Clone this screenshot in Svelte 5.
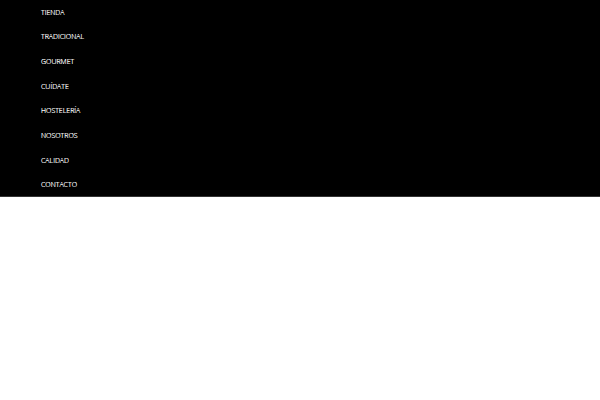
<script>
  const items = [
    'TIENDA',
    'TRADICIONAL',
    'GOURMET',
    'CUÍDATE',
    'HOSTELERÍA',
    'NOSOTROS',
    'CALIDAD',
    'CONTACTO'
  ];
</script>

<nav>
  <ul>
    {#each items as item}
      <li><a href="#{item.toLowerCase()}">{item}</a></li>
    {/each}
  </ul>
</nav>

<style>
  :global(body) {
    background: #fff;
  }

  nav {
    background: #000;
    box-shadow: inset 0 -1px #333, 0 1px 8px rgba(0, 0, 0, 0.03);
  }

  ul {
    display: grid;
    grid-auto-rows: 1fr;
    min-height: 197px;
    margin: 0;
    padding: 0 0 0 41px;
    list-style: none;
  }

  li {
    display: flex;
    align-items: center;
  }

  a {
    color: #fff;
    font: 300 7px/17px "Open Sans", sans-serif;
    text-decoration: none;
    text-shadow: 0 0 0 #fff;
  }
</style>
